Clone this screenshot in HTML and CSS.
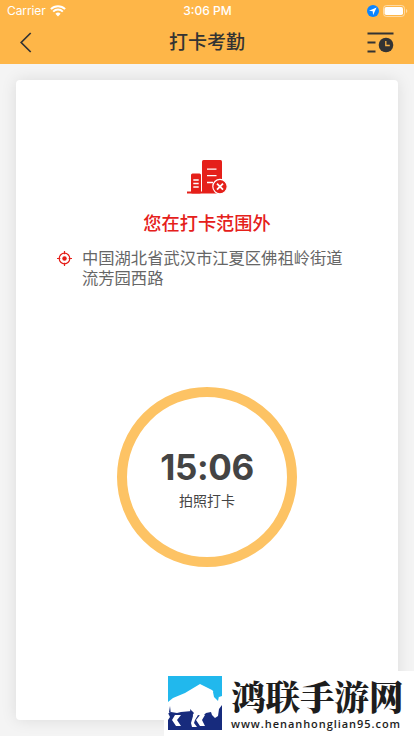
FILE: index.html
```html
<!DOCTYPE html>
<html lang="zh-CN">
<head>
<meta charset="utf-8">
<meta name="viewport" content="width=device-width, initial-scale=1">
<title>打卡考勤</title>
<link rel="stylesheet" href="styles.css">
</head>
<body>
<div class="screen">
  <header class="header">
    <div class="status">
      <div class="status-left"><span class="carrier">Carrier</span>
        <svg class="wifi" width="16" height="12" viewBox="0 0 16 12"><path d="M8 11.5 5.4 8.7a3.8 3.8 0 0 1 5.2 0z" fill="#fff"/><path d="M3.2 6.6a6.8 6.8 0 0 1 9.6 0M.9 4.1a10 10 0 0 1 14.2 0" fill="none" stroke="#fff" stroke-width="2"/></svg>
      </div>
      <span class="clock">3:06 PM</span>
      <div class="status-right">
        <svg width="12" height="12" viewBox="0 0 12 12"><circle cx="6" cy="6" r="6" fill="#0a84ff"/><path d="M9.6 2.4 2 5.8l3.7.5.4 3.7z" fill="#fff"/></svg>
        <svg width="25" height="12" viewBox="0 0 25 12"><rect x=".5" y=".5" width="21" height="11" rx="3" fill="none" stroke="#fff" stroke-opacity=".5"/><rect x="1.5" y="2" width="18.5" height="8" rx="1.8" fill="#fff"/><path d="M23 4v4q1.3-.6 1.3-2T23 4z" fill="#fff" opacity=".5"/></svg>
      </div>
    </div>
    <div class="navbar">
      <svg class="back" width="12" height="22" viewBox="0 0 12 22"><path d="M10.7 1 1.2 10.5l9.5 9.5" fill="none" stroke="#333" stroke-width="1.7"/></svg>
      <h1>打卡考勤</h1>
      <svg class="records" width="27" height="22" viewBox="0 0 27 22"><path d="M.5 1.5h26M.5 10.5h8M.5 19.5h8" stroke="#333" stroke-width="1.9"/><circle cx="19" cy="13" r="7.3" fill="#333"/><path d="M18.8 9v4.5h4" fill="none" stroke="#feb648" stroke-width="1.3"/></svg>
    </div>
  </header>
  <main class="card">
    <svg class="building" width="41" height="34" viewBox="0 0 41 34"><path d="M0 31.5h35v2H0z" fill="#e5201a"/><rect x="4" y="13.5" width="10" height="20" rx="1.5" fill="#e5201a"/><rect x="15" y="0" width="20" height="33" rx="1.5" fill="#e5201a"/><path d="M6.3 20h5.4M6.3 23.5h5.4M6.3 27h5.4M20 9.2h9.5M20 15.7h9.5M20 22.5h6" stroke="#fff" stroke-width="1.3"/><circle cx="33" cy="26.6" r="7.2" fill="#e5201a" stroke="#fff" stroke-width="1.2"/><path d="m30 23.6 6 6m0-6-6 6" stroke="#fff" stroke-width="1.8"/></svg>
    <h2>您在打卡范围外</h2>
    <div class="address">
      <svg width="15" height="15" viewBox="0 0 15 15"><g fill="none" stroke="#e5201a" stroke-width="1.2"><circle cx="7.5" cy="7.5" r="5.3"/><path d="M7.5 0v3.3M7.5 11.7V15M0 7.5h3.3M11.7 7.5H15"/></g><circle cx="7.5" cy="7.5" r="2.2" fill="#e5201a"/></svg>
      <p>中国湖北省武汉市江夏区佛祖岭街道流芳园西路</p>
    </div>
    <button class="punch"><span class="time">15:06</span><span class="label">拍照打卡</span></button>
  </main>
  <aside class="brand">
    <svg width="54" height="54" viewBox="0 0 54 54"><path fill="#21b8ed" d="M0 0h54v54H0z"/><path fill="#172b7d" d="M0 26h54v28H0z"/><path fill="#fff" d="M0 26 5 22l12-5L32 8l12 6 4 4 3 3 3-1v9l-3 4-1 7-3 2-3-3-1-3-5 1-3 3-5-1-3 5-1 3 3 4h-5l-1-4 2-7-1-5-11 1-4 1-6-1-5 3-3 6 3 3H0v-4l2-3-2-4z"/><path fill="#fff" d="M7 39h6l-4 5 4 6H8l-4-6zM32 39h5l-3 5 3 6h-5l-4-6z"/><path fill="#172b7d" d="m2 30-1 6 2 3zM22 33l1 8 3-4z"/><path fill="#21b8ed" d="m48 10-3 6 1 5 4 4 1-5-2-2v-4z"/></svg>
    <div class="brand-text"><strong>鸿联手游网</strong><span>www.henanhonglian95.com</span></div>
  </aside>
</div>
</body>
</html>
```
FILE: styles.css
```css
* { box-sizing: border-box; }
body { margin: 0; font-family: Inter, "Noto Sans CJK SC", sans-serif; }
.screen { position: relative; height: 736px; overflow: hidden; background: #f4f4f4; }
.header { height: 64px; background: #feb648; }
.status { height: 21px; padding: 0 6px 0 7px; display: grid; grid-template-columns: 1fr auto 1fr; align-items: center; color: #fff; font-size: 12px; }
.status-left, .status-right { display: flex; align-items: center; gap: 4px; }
.status-right { justify-content: flex-end; }
.carrier { letter-spacing: -.1px; }
.clock { font-weight: 500; }
.navbar { height: 43px; padding: 0 20px; display: grid; grid-template-columns: 1fr auto 1fr; align-items: center; }
h1 { margin: 0; font-size: 19px; font-weight: 500; line-height: 28px; color: #333; }
.records { justify-self: end; }
.card { margin: 16px; height: 640px; padding-top: 80px; display: flex; flex-direction: column; align-items: center; background: #fff; border-radius: 4px; box-shadow: 0 0 16px rgba(0, 0, 0, .1); }
.building { flex: none; }
h2 { margin: 16px 0 0; font-size: 18.2px; font-weight: 500; line-height: 27px; color: #e5201a; }
.address { width: 301px; margin-top: 12px; display: flex; align-items: flex-start; gap: 10.5px; }
.address svg { flex: none; margin-top: 2px; }
.address p { width: 264px; margin: 0; color: #666; font-size: 16.3px; line-height: 19.5px; }
.punch { width: 180px; height: 180px; margin-top: 99px; padding: 3px 0 0; border: 10px solid #fdc364; border-radius: 50%; background: #fff; display: flex; flex-direction: column; align-items: center; justify-content: center; font-family: inherit; color: #444; }
.time { font-size: 35px; font-weight: 700; line-height: 40px; letter-spacing: -.4px; }
.label { margin-top: 4px; font-size: 14px; line-height: 20px; }
.brand { position: absolute; left: 164px; top: 671px; width: 250px; height: 65px; padding: 5px 4px; display: flex; gap: 9px; background: #fff; }
.brand svg { flex: none; }
.brand-text { display: flex; flex-direction: column; color: #1d1d1d; }
.brand-text strong { font-family: "Noto Serif CJK SC", "Noto Sans CJK SC", serif; font-size: 34.5px; line-height: 38px; font-weight: 900; }
.brand-text span { margin-top: 3px; font-family: "Open Sans", sans-serif; font-size: 11px; font-weight: 600; letter-spacing: .95px; line-height: 13px; white-space: nowrap; }
```
